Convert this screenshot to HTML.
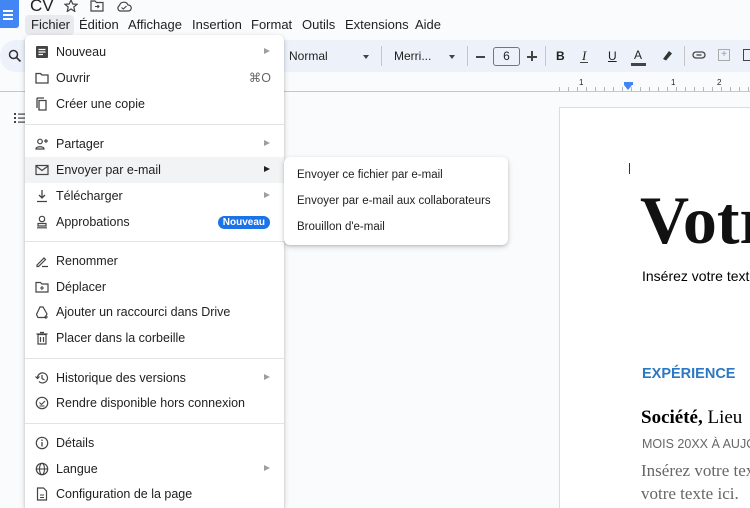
<!DOCTYPE html>
<html><head><meta charset="utf-8"><style>
*{margin:0;padding:0;box-sizing:border-box}
html{width:750px;height:508px;overflow:hidden}
body{width:750px;height:508px;overflow:hidden;background:#f9fbfd;font-family:"Liberation Sans",Arial,sans-serif;color:#1f1f1f;position:relative}
.a{position:absolute}
.mb{font-size:13px;top:17px;white-space:nowrap}
.menu{position:absolute;left:25px;top:35px;width:259px;height:473px;background:#fff;border-radius:6px 6px 0 0;box-shadow:0 2px 6px rgba(0,0,0,.18),0 1px 2px rgba(0,0,0,.15);overflow:hidden}
.it{position:absolute;left:0;width:259px;height:26px;font-size:12.5px;line-height:26px;padding-left:31px;white-space:nowrap}
.ic{position:absolute;left:10px;top:6px;width:14px;height:14px}
.arr{position:absolute;right:14px;top:9px;width:0;height:0;border-left:6px solid #9e9e9e;border-top:3.5px solid transparent;border-bottom:3.5px solid transparent}
.sep{position:absolute;left:0;width:259px;height:1px;background:#e3e3e3}
.sub{position:absolute;left:284px;top:157px;width:224px;height:88px;background:#fff;border-radius:6px;box-shadow:0 2px 6px rgba(0,0,0,.18),0 1px 2px rgba(0,0,0,.12)}
.sub div{position:absolute;left:13px;font-size:11.5px;white-space:nowrap}
svg{display:block}
.pg{position:absolute;left:559px;top:107px;width:191px;height:401px;background:#fff;border-left:1px solid #dadce0;border-top:1px solid #dadce0;overflow:hidden}
.pg div{position:absolute;white-space:nowrap}
</style></head><body>
<div class="a" style="left:0;top:0;width:19px;height:28px;background:#4285f4;border-radius:0 0 3px 0"></div>
<div class="a" style="left:3px;top:10px;width:10px;height:2px;background:#fff"></div>
<div class="a" style="left:3px;top:14px;width:10px;height:2px;background:#fff"></div>
<div class="a" style="left:3px;top:18px;width:10px;height:2px;background:#fff"></div>
<div class="a" style="left:30px;top:0;width:30px;height:16px;overflow:hidden"><div style="position:absolute;left:0;top:-4px;font-size:17px;line-height:20px">CV</div></div>
<svg class="a" style="left:64px;top:0" width="14" height="12" viewBox="0 0 14 12"><path d="M7 0 L8.8 4 L13 4.3 L9.8 7 L10.8 11.5 L7 9 L3.2 11.5 L4.2 7 L1 4.3 L5.2 4 Z" fill="none" stroke="#444" stroke-width="1.2"/></svg>
<svg class="a" style="left:90px;top:0" width="14" height="12" viewBox="0 0 14 12"><path d="M1 1H5L6.5 2.5H13V11H1Z" fill="none" stroke="#444" stroke-width="1.2"/><path d="M5 6.5H9M7.5 5L9 6.5L7.5 8" fill="none" stroke="#444" stroke-width="1.1"/></svg>
<svg class="a" style="left:116px;top:0" width="16" height="12" viewBox="0 0 16 12"><path d="M4 11H12.5A3 3 0 0 0 12 5A4.5 4.5 0 0 0 3.5 5.5A3 3 0 0 0 4 11Z" fill="none" stroke="#444" stroke-width="1.2"/><path d="M5.5 7.5L7.3 9L10.5 6" fill="none" stroke="#444" stroke-width="1.1"/></svg>
<div class="a" style="left:25px;top:15px;width:49px;height:20px;background:#e8eaed;border-radius:4px"></div>
<div class="mb a" style="left:31px">Fichier</div>
<div class="mb a" style="left:79px">Édition</div>
<div class="mb a" style="left:128px">Affichage</div>
<div class="mb a" style="left:192px">Insertion</div>
<div class="mb a" style="left:251px">Format</div>
<div class="mb a" style="left:302px">Outils</div>
<div class="mb a" style="left:345px">Extensions</div>
<div class="mb a" style="left:415px">Aide</div>
<div class="a" style="left:0;top:40px;width:750px;height:32px;background:#edf2fa;border-radius:16px 0 0 16px"></div>
<svg class="a" style="left:8px;top:49px" width="14" height="14" viewBox="0 0 14 14"><circle cx="5.5" cy="5.5" r="4" fill="none" stroke="#333" stroke-width="1.5"/><path d="M8.5 8.5L12.5 12.5" stroke="#333" stroke-width="1.6"/></svg>
<div class="a" style="left:289px;top:49px;font-size:12px">Normal</div>
<div class="a" style="left:363px;top:55px;border-top:4px solid #444;border-left:3.5px solid transparent;border-right:3.5px solid transparent"></div>
<div class="a" style="left:381px;top:46px;width:1px;height:20px;background:#c7c7c7"></div>
<div class="a" style="left:394px;top:49px;font-size:12px">Merri...</div>
<div class="a" style="left:449px;top:55px;border-top:4px solid #444;border-left:3.5px solid transparent;border-right:3.5px solid transparent"></div>
<div class="a" style="left:467px;top:46px;width:1px;height:20px;background:#c7c7c7"></div>
<div class="a" style="left:476px;top:56px;width:9px;height:1.5px;background:#444"></div>
<div class="a" style="left:493px;top:47px;width:27px;height:19px;border:1px solid #747775;border-radius:3px;font-size:12px;text-align:center;line-height:17px">6</div>
<div class="a" style="left:527px;top:56px;width:10px;height:1.5px;background:#444"></div>
<div class="a" style="left:531px;top:51px;width:1.5px;height:10px;background:#444"></div>
<div class="a" style="left:545px;top:46px;width:1px;height:20px;background:#c7c7c7"></div>
<div class="a" style="left:556px;top:49px;font-size:12px;font-weight:bold">B</div>
<div class="a" style="left:582px;top:48px;font-size:13px;font-style:italic;font-family:'Liberation Serif',serif">I</div>
<div class="a" style="left:580px;top:62px;width:8px;height:1.3px;background:#444"></div>
<div class="a" style="left:608px;top:49px;font-size:12px;text-decoration:underline">U</div>
<div class="a" style="left:634px;top:48px;font-size:12px">A</div>
<div class="a" style="left:631px;top:63px;width:15px;height:3px;background:#444"></div>
<svg class="a" style="left:660px;top:48px" width="14" height="14" viewBox="0 0 14 14"><path d="M3 11L9 3L12 5.5L6 12.5Z" fill="#333"/></svg>
<div class="a" style="left:684px;top:46px;width:1px;height:20px;background:#c7c7c7"></div>
<svg class="a" style="left:692px;top:50px" width="14" height="10" viewBox="0 0 14 10"><rect x="1" y="2" width="12" height="6" rx="3" fill="none" stroke="#444" stroke-width="1.3"/><path d="M4.5 5H9.5" stroke="#444" stroke-width="1.3"/></svg>
<div class="a" style="left:718px;top:49px;width:12px;height:12px;border:1px solid #aaa;color:#999;font-size:10px;line-height:10px;text-align:center">+</div>
<div class="a" style="left:743px;top:49px;width:7px;height:12px;border:1.3px solid #444;border-right:none"></div>
<div class="a" style="left:0;top:91px;width:750px;height:1px;background:#c7c7c7"></div>
<div class="a" style="left:559px;top:87px;width:191px;height:4px;background:repeating-linear-gradient(90deg,#888 0 1px,transparent 1px 9px);opacity:.6"></div>
<div class="a" style="left:579px;top:78px;font-size:8px">1</div>
<div class="a" style="left:671px;top:78px;font-size:8px">1</div>
<div class="a" style="left:717px;top:78px;font-size:8px">2</div>
<div class="a" style="left:624px;top:82px;width:9px;height:3px;background:#4285f4"></div>
<div class="a" style="left:624px;top:85px;border-top:5px solid #4285f4;border-left:4.5px solid transparent;border-right:4.5px solid transparent"></div>
<svg class="a" style="left:14px;top:112px" width="12" height="12" viewBox="0 0 12 12"><g fill="#444"><rect x="0" y="1" width="2" height="2"/><rect x="0" y="5" width="2" height="2"/><rect x="0" y="9" width="2" height="2"/><rect x="4" y="1.5" width="8" height="1.2"/><rect x="4" y="5.5" width="8" height="1.2"/><rect x="4" y="9.5" width="8" height="1.2"/></g></svg>
<div class="pg">
 <div style="left:69px;top:55px;width:1px;height:11px;background:#333"></div>
 <div style="left:80px;top:73px;font-family:'Liberation Serif',serif;font-weight:bold;font-size:68px;color:#111">Votre</div>
 <div style="left:82px;top:160px;font-size:14px;color:#000">Insérez votre texte</div>
 <div style="left:82px;top:258px;font-size:14.5px;font-weight:bold;color:#2b79c2">EXPÉRIENCE</div>
 <div style="left:81px;top:299px;font-family:'Liberation Serif',serif;font-size:19px;color:#000"><b>Société,</b> Lieu</div>
 <div style="left:82px;top:329px;font-size:12.5px;color:#666">MOIS 20XX À AUJOURD'HUI</div>
 <div style="left:81px;top:353px;font-family:'Liberation Serif',serif;font-size:17px;color:#666">Insérez votre texte</div>
 <div style="left:81px;top:376px;font-family:'Liberation Serif',serif;font-size:17px;color:#666">votre texte ici.</div>
</div>
<div class="menu">
 <div class="it" style="top:4px"><svg class="ic" viewBox="0 0 14 14"><rect x="1" y="1" width="12" height="12" rx="1" fill="#444"/><path d="M3.5 4.5H10.5M3.5 7H10.5M3.5 9.5H8" stroke="#fff" stroke-width="1.2"/></svg>Nouveau<span class="arr"></span></div>
 <div class="it" style="top:30px"><svg class="ic" viewBox="0 0 14 14"><path d="M1 2.5H5.5L7 4H13V12H1Z" fill="none" stroke="#444" stroke-width="1.3"/></svg>Ouvrir<span style="position:absolute;right:13px;color:#666">⌘O</span></div>
 <div class="it" style="top:56px"><svg class="ic" viewBox="0 0 14 14"><path d="M4 3.5H11V13H4Z M2 1H9M2 1V11" fill="none" stroke="#444" stroke-width="1.3"/></svg>Créer une copie</div>
 <div class="sep" style="top:89px"></div>
 <div class="it" style="top:96px"><svg class="ic" viewBox="0 0 14 14"><circle cx="5" cy="4.5" r="2.3" fill="none" stroke="#444" stroke-width="1.2"/><path d="M1 12C1 9 9 9 9 12Z" fill="none" stroke="#444" stroke-width="1.2"/><path d="M11 2V6M9 4H13" stroke="#444" stroke-width="1.2"/></svg>Partager<span class="arr"></span></div>
 <div class="it" style="top:122px;background:#f1f3f4"><svg class="ic" viewBox="0 0 14 14"><rect x="1" y="2.5" width="12" height="9" fill="none" stroke="#444" stroke-width="1.2"/><path d="M1 3L7 7.5L13 3" fill="none" stroke="#444" stroke-width="1.2"/></svg>Envoyer par e-mail<span class="arr" style="border-left-color:#222"></span></div>
 <div class="it" style="top:148px"><svg class="ic" viewBox="0 0 14 14"><path d="M7 1V9M4 6L7 9L10 6M2 12.5H12" fill="none" stroke="#444" stroke-width="1.3"/></svg>Télécharger<span class="arr"></span></div>
 <div class="it" style="top:174px"><svg class="ic" viewBox="0 0 14 14"><circle cx="7" cy="4" r="2.7" fill="none" stroke="#444" stroke-width="1.2"/><path d="M3 8.5H11V11H3ZM2 12.8H12" fill="none" stroke="#444" stroke-width="1.2"/></svg>Approbations<span style="position:absolute;right:14px;top:7px;height:13px;line-height:13px;padding:0 5px;background:#1a73e8;color:#fff;border-radius:7px;font-size:10px;font-weight:bold">Nouveau</span></div>
 <div class="sep" style="top:206px"></div>
 <div class="it" style="top:213px"><svg class="ic" viewBox="0 0 14 14"><path d="M2 11L9 4L10.5 5.5L3.5 12.5H2ZM7 12.5H13" fill="none" stroke="#444" stroke-width="1.2"/></svg>Renommer</div>
 <div class="it" style="top:239px"><svg class="ic" viewBox="0 0 14 14"><path d="M1 2.5H5.5L7 4H13V12H1Z" fill="none" stroke="#444" stroke-width="1.2"/><path d="M5 8H9M7 6V10" stroke="#444" stroke-width="1.1"/></svg>Déplacer</div>
 <div class="it" style="top:264px"><svg class="ic" viewBox="0 0 14 14"><path d="M5 2H8L12 9L10 12.5H3L1.5 9.5Z" fill="none" stroke="#444" stroke-width="1.2"/><path d="M11 10V14M9 12H13" stroke="#444" stroke-width="1.1"/></svg>Ajouter un raccourci dans Drive</div>
 <div class="it" style="top:290px"><svg class="ic" viewBox="0 0 14 14"><path d="M3 3.5H11V13H3ZM1.5 3H12.5M5 1.5H9M5.5 6V11M8.5 6V11" fill="none" stroke="#444" stroke-width="1.2"/></svg>Placer dans la corbeille</div>
 <div class="sep" style="top:323px"></div>
 <div class="it" style="top:330px"><svg class="ic" viewBox="0 0 14 14"><path d="M2.5 7A5 5 0 1 1 4 10.5M7 4V7.5L9.5 9M0.5 5.5L2.5 7.5L4.5 5.5" fill="none" stroke="#444" stroke-width="1.2"/></svg>Historique des versions<span class="arr"></span></div>
 <div class="it" style="top:355px"><svg class="ic" viewBox="0 0 14 14"><circle cx="7" cy="7" r="5.7" fill="none" stroke="#444" stroke-width="1.2"/><path d="M4.5 6.5L6.5 8.5L10 5M4.5 10H9.5" fill="none" stroke="#444" stroke-width="1.1"/></svg>Rendre disponible hors connexion</div>
 <div class="sep" style="top:388px"></div>
 <div class="it" style="top:395px"><svg class="ic" viewBox="0 0 14 14"><circle cx="7" cy="7" r="5.7" fill="none" stroke="#444" stroke-width="1.2"/><path d="M7 6V10.5M7 3.5V5" stroke="#444" stroke-width="1.3"/></svg>Détails</div>
 <div class="it" style="top:421px"><svg class="ic" viewBox="0 0 14 14"><circle cx="7" cy="7" r="5.7" fill="none" stroke="#444" stroke-width="1.2"/><ellipse cx="7" cy="7" rx="2.5" ry="5.7" fill="none" stroke="#444" stroke-width="1.1"/><path d="M1.3 7H12.7" stroke="#444" stroke-width="1.1"/></svg>Langue<span class="arr"></span></div>
 <div class="it" style="top:446px"><svg class="ic" viewBox="0 0 14 14"><path d="M2.5 1H8.5L11.5 4V13H2.5Z" fill="none" stroke="#444" stroke-width="1.2"/><path d="M5 8H9M5 10.5H9" stroke="#444" stroke-width="1.1"/></svg>Configuration de la page</div>
</div>
<div class="sub">
 <div style="top:12px">Envoyer ce fichier par e-mail</div>
 <div style="top:38px">Envoyer par e-mail aux collaborateurs</div>
 <div style="top:64px">Brouillon d'e-mail</div>
</div>
</body></html>
